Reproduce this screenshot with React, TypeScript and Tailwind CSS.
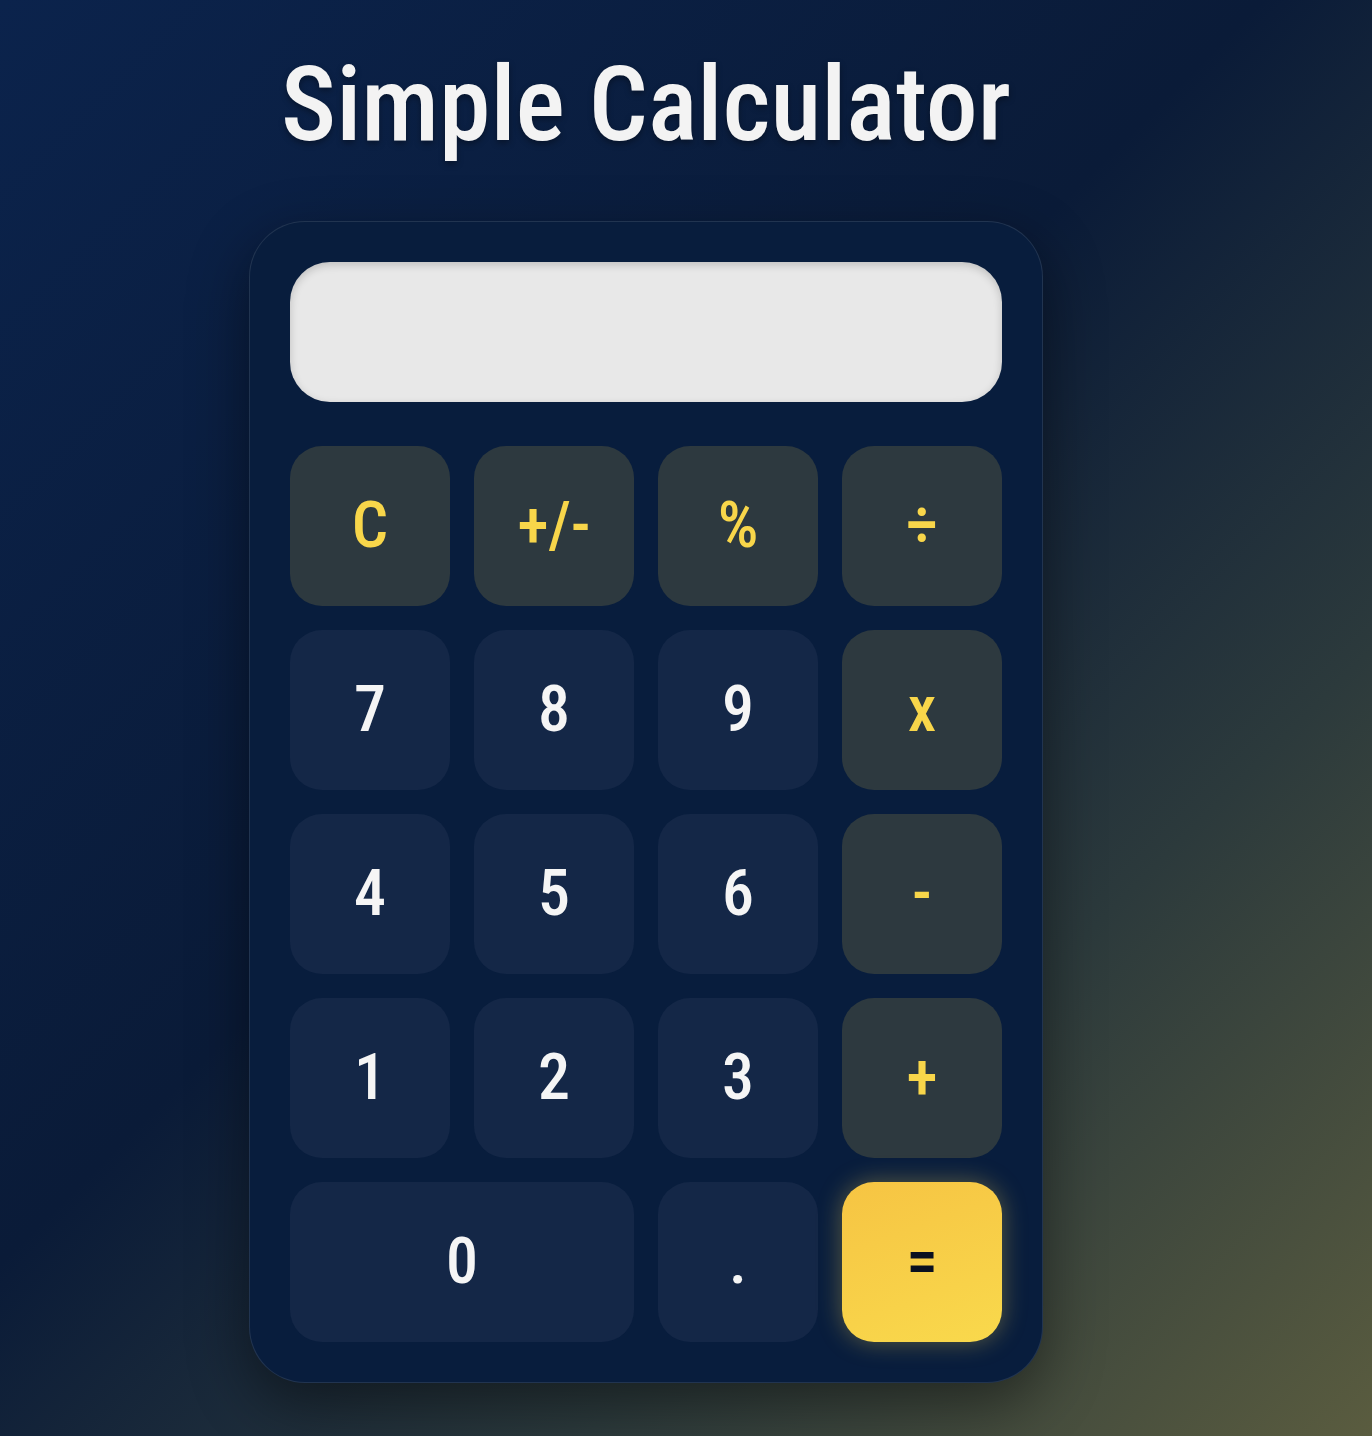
import React from "react";

type Key = { label: string; kind: "fn" | "num" | "eq"; wide?: boolean };

const keys: Key[] = [
  { label: "C", kind: "fn" },
  { label: "+/-", kind: "fn" },
  { label: "%", kind: "fn" },
  { label: "÷", kind: "fn" },
  { label: "7", kind: "num" },
  { label: "8", kind: "num" },
  { label: "9", kind: "num" },
  { label: "x", kind: "fn" },
  { label: "4", kind: "num" },
  { label: "5", kind: "num" },
  { label: "6", kind: "num" },
  { label: "-", kind: "fn" },
  { label: "1", kind: "num" },
  { label: "2", kind: "num" },
  { label: "3", kind: "num" },
  { label: "+", kind: "fn" },
  { label: "0", kind: "num", wide: true },
  { label: ".", kind: "num" },
  { label: "=", kind: "eq" },
];

const font = { fontFamily: '"Roboto Condensed", Roboto, "Liberation Sans", sans-serif', fontStretch: "condensed" };

export default function App() {
  return (
    <div
      className="min-h-[1436px] w-full bg-[linear-gradient(135deg,#0b234c_0%,#0a1b38_45%,#2c3a3c_72%,#5a5c3f_100%)] pl-[249px] pt-[40px]"
      style={font}
    >
      <div className="flex w-[794px] flex-col items-center">
        <h1 className="text-[104px] font-medium leading-[130px] text-[#f3f3f3] [text-shadow:0_3px_6px_rgba(0,0,0,0.35)]">
          Simple Calculator
        </h1>

        {/* Calculator body */}
        <div className="mt-[51px] w-[794px] rounded-[56px] border border-white/10 bg-[#081d3d] p-[40px] shadow-[0_20px_60px_rgba(0,0,0,0.45)]">
          <div className="h-[140px] w-full rounded-[40px] bg-[#e8e8e8] shadow-[inset_0_3px_8px_rgba(0,0,0,0.18)]" />

          <div className="mt-[44px] grid grid-cols-4 gap-[24px]">
            {keys.map((k) => {
              const base = "flex h-[160px] items-center justify-center rounded-[32px] text-[64px] font-medium leading-none";
              const style =
                k.kind === "fn"
                  ? "bg-[#2d393f] text-[#f8d64a]"
                  : k.kind === "num"
                  ? "bg-[#142747] text-[#f5f5f5]"
                  : "bg-[linear-gradient(160deg,#f6c443,#f9d94c)] text-[#0a1020] shadow-[0_0_24px_rgba(247,210,74,0.35)]";
              return (
                <button key={k.label} className={`${base} ${style} ${k.wide ? "col-span-2" : ""}`}>
                  {k.label}
                </button>
              );
            })}
          </div>
        </div>
      </div>
    </div>
  );
}
